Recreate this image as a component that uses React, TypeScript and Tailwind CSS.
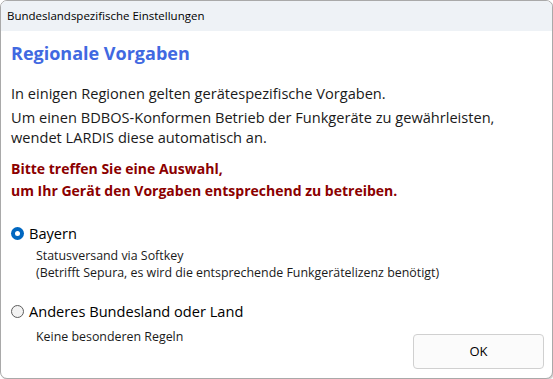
const FONT = { fontFamily: '"Open Sans", "Noto Sans", sans-serif' };

function Radio({ checked }: { checked: boolean }) {
  return checked ? (
    <span className="w-[13px] h-[13px] rounded-full bg-[#0067c0] flex items-center justify-center shrink-0">
      <span className="w-[5px] h-[5px] rounded-full bg-white" />
    </span>
  ) : (
    <span className="w-[13px] h-[13px] rounded-full border border-[#5d5d5d] bg-[#f3f3f3] shrink-0" />
  );
}

export default function App() {
  return (
    <div className="w-[553px] h-[379px] bg-white" style={FONT}>
      <div className="w-[553px] h-[379px] rounded-[7px] border border-[#a9a9a9] shadow-[1px_1px_1px_rgba(0,0,0,0.2)] overflow-hidden flex flex-col bg-white">
        <div className="h-[30px] bg-[#eef2f6] flex items-center px-[6px] text-[11.5px] text-black shrink-0">
          Bundeslandspezifische Einstellungen
        </div>

        <div className="flex-1 flex flex-col px-[10px] relative">
          <h1 className="text-[18px] font-bold text-[#4169e1] mt-[9px] leading-[26px]">Regionale Vorgaben</h1>

          <div className="mt-[17px] text-[14.6px] leading-[20px] text-[#1a1a1a]">
            <p>In einigen Regionen gelten gerätespezifische Vorgaben.</p>
            <p className="mt-[4px]">Um einen BDBOS-Konformen Betrieb der Funkgeräte zu gewährleisten,</p>
            <p>wendet LARDIS diese automatisch an.</p>
          </div>

          <div className="mt-[11px] text-[14px] leading-[22px] font-bold text-[#8b0000]">
            <p>Bitte treffen Sie eine Auswahl,</p>
            <p>um Ihr Gerät den Vorgaben entsprechend zu betreiben.</p>
          </div>

          <div className="mt-[21px] flex items-center gap-[5px] text-[14.6px] leading-[20px]">
            <Radio checked />
            <span>Bayern</span>
          </div>
          <div className="ml-[25px] mt-[4px] text-[12.4px] leading-[17px] text-[#1a1a1a]">
            <p>Statusversand via Softkey</p>
            <p>(Betrifft Sepura, es wird die entsprechende Funkgerätelizenz benötigt)</p>
          </div>

          <div className="mt-[20px] flex items-center gap-[5px] text-[14.6px] leading-[20px]">
            <Radio checked={false} />
            <span>Anderes Bundesland oder Land</span>
          </div>
          <div className="ml-[25px] mt-[7px] text-[12.4px] leading-[17px] text-[#1a1a1a]">
            <p>Keine besonderen Regeln</p>
          </div>

          <button className="absolute right-[8px] bottom-[9px] w-[131px] h-[35px] rounded-[4px] border border-[#d0d0d0] bg-[#fbfbfb] text-[13px] text-black">
            OK
          </button>
        </div>
      </div>
    </div>
  );
}
